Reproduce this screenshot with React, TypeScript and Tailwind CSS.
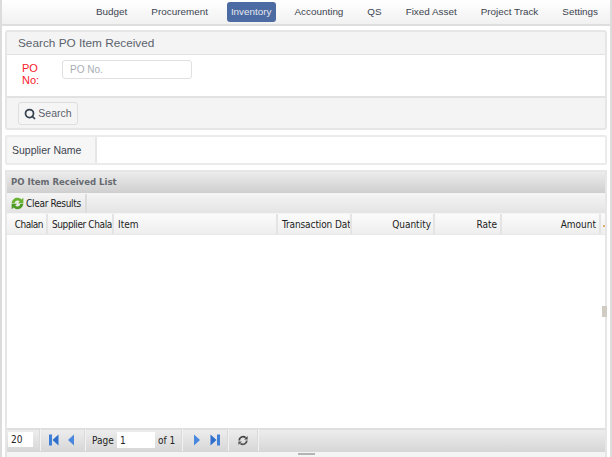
import { Search } from 'lucide-react';

const navItems = ['Budget', 'Procurement', 'Inventory', 'Accounting', 'QS', 'Fixed Asset', 'Project Track', 'Settings'];

const columns = [
  { label: 'Chalan', width: 'w-[41px]', align: 'text-right pr-[3px] tracking-[-0.5px]' },
  { label: 'Supplier Chalan', width: 'w-[66px]', align: 'text-left pl-[4px] tracking-[-0.4px]' },
  { label: 'Item', width: 'w-[164px]', align: 'text-left pl-[4px]' },
  { label: 'Transaction Date', width: 'w-[74px]', align: 'text-left pl-[4px] tracking-[-0.1px]' },
  { label: 'Quantity', width: 'w-[83px]', align: 'text-right pr-[2px]' },
  { label: 'Rate', width: 'w-[67px]', align: 'text-right pr-[3px]' },
  { label: 'Amount', width: 'w-[99px]', align: 'text-right pr-[3px]' },
];

function Separator({ className }: { className: string }) {
  return <div className={`h-[22px] w-[2px] shrink-0 border-r border-[#f2f2f2] bg-[#dadada] ${className}`} />;
}

function FirstIcon({ flip, className }: { flip?: boolean; className: string }) {
  return (
    <svg width="10" height="12" viewBox="0 0 10 12" className={`shrink-0 ${flip ? 'rotate-180' : ''} ${className}`}>
      <rect x="0" y="0.5" width="3" height="11" fill="#3f7fd8" />
      <path d="M9.5 0.5V11.5L3.5 6Z" fill="#2f6fcc" />
    </svg>
  );
}

function PrevIcon({ flip, className }: { flip?: boolean; className: string }) {
  return (
    <svg width="6" height="12" viewBox="0 0 6 12" className={`shrink-0 ${flip ? 'rotate-180' : ''} ${className}`}>
      <path d="M6 0.5V11.5L0 6Z" fill="#4a88de" />
    </svg>
  );
}

function GreenRefresh() {
  return (
    <svg width="13" height="13" viewBox="0 0 12 12" className="shrink-0">
      <path d="M0.6 5.8C1 2.4 3.8 0.6 6.2 0.8 7.7 0.9 8.8 1.6 9.5 2.4L11.4 0.6V5.8H6.4L8.1 4.1C7.5 3.5 6.8 3.2 6 3.2 4.6 3.2 3.7 4.2 3.4 5.8Z" fill="#69b330" />
      <path d="M11.4 6.2C11 9.6 8.2 11.4 5.8 11.2 4.3 11.1 3.2 10.4 2.5 9.6L0.6 11.4V6.2H5.6L3.9 7.9C4.5 8.5 5.2 8.8 6 8.8 7.4 8.8 8.3 7.8 8.6 6.2Z" fill="#4c9a24" />
    </svg>
  );
}

function GreyRefresh() {
  return (
    <svg width="10" height="11" viewBox="0 0 10 11" className="ml-[9px] shrink-0" fill="none">
      <path d="M1.2 5.5A3.8 3.8 0 0 1 7.6 2.7" stroke="#444" strokeWidth="1.8" />
      <path d="M8.8 5.5A3.8 3.8 0 0 1 2.4 8.3" stroke="#555" strokeWidth="1.8" />
      <path d="M6.2 4.4H9.6V0.9Z" fill="#444" />
      <path d="M3.8 6.6H0.4V10.1Z" fill="#555" />
    </svg>
  );
}

export default function App() {
  return (
    <div className="h-[457px] w-[612px] overflow-hidden border-x-2 border-[#dcdcdc] bg-white font-['Liberation_Sans',sans-serif]">
      <nav className="flex h-[26px] items-center justify-end border-b-2 border-[#dedede] bg-gradient-to-b from-white to-[#f1f1f1] text-[9.9px] text-[#3c4450]">
        {navItems.map((item) => (
          <a
            key={item}
            className={
              item === 'Inventory'
                ? 'mx-[7px] flex h-[20px] items-center rounded-[3px] bg-[#4d6ba3] px-[4px] text-[#e4e8f0]'
                : 'mx-[12px] whitespace-nowrap'
            }
          >
            {item}
          </a>
        ))}
      </nav>

      <div className="flex flex-col pl-[3px] pr-[3px] pt-[4px]">
        <section className="h-[100px] rounded-[3px] border-2 border-[#e6e6e6] bg-[#f4f4f4]">
          <h2 className="box-content flex h-[21px] items-center border-b-2 border-[#e2e2e2] pl-[11px] pt-[1px] text-[11.8px] text-[#5b626c] -mb-[1px]">
            Search PO Item Received
          </h2>
          <div className="flex h-[43px] border-b-2 border-[#e2e2e2] bg-white">
            <label className="ml-[15px] mt-[7px] w-[25px] text-[11px] leading-[12px] text-[#f8202c]">PO No:</label>
            <input
              placeholder="PO No."
              className="ml-[15px] mt-[5px] h-[19px] w-[130px] rounded-[3px] border border-[#e0e0e0] px-[7px] text-[10px] placeholder:text-[#a9adb3]"
            />
          </div>
          <div className="pl-[11px] pt-[4px]">
            <button className="flex h-[23px] w-[60px] items-center justify-center gap-[2px] rounded-[3px] border border-[#dedede] bg-[#f5f5f5] text-[10.5px] text-[#5b626c]">
              <Search size={12} strokeWidth={3.5} className="text-[#36424f]" />
              Search
            </button>
          </div>
        </section>

        <section className="mt-[5px] flex h-[30px] rounded-[2px] border-2 border-[#ebebeb] bg-white">
          <div className="flex w-[90px] items-center border-r-2 border-[#e6e6e6] bg-[#f6f6f6] pl-[5px] pt-[1px] text-[10.5px] text-[#3d4550]">
            Supplier Name
          </div>
        </section>

        <section className="mt-[5px] flex h-[282px] flex-col border-x-2 border-t-2 border-[#e6e6e6] bg-white font-['DejaVu_Sans_Condensed','DejaVu_Sans',sans-serif]">
          <h3 className="flex h-[21px] items-center bg-gradient-to-b from-[#ececec] to-[#cfcfcf] pl-[4px] text-[9.5px] font-bold text-[#666a70]">
            PO Item Received List
          </h3>
          <div className="flex h-[21px] items-center border-y border-[#f4f4f4] bg-gradient-to-b from-[#f4f4f4] to-[#e4e4e4] text-[10px] text-[#222]">
            <div className="flex h-full w-[80px] items-center gap-[2px] border-r-2 border-[#dcdcdc] pl-[4px] tracking-[-0.3px]">
              <GreenRefresh />
              Clear Results
            </div>
          </div>
          <div className="relative flex h-[21px] items-stretch border-b border-[#e8e8e8] bg-gradient-to-b from-[#fbfbfb] to-[#eeeeee] text-[10px] text-[#222]">
            {columns.map((column) => (
              <div key={column.label} className={`${column.width} ${column.align} overflow-hidden whitespace-nowrap border-r-2 border-[#e4e4e4] leading-[22px]`}>
                {column.label}
              </div>
            ))}
            <span className="absolute right-0 top-[11px] h-[2px] w-[2px] bg-[#e0b070]" />
          </div>
          <div className="relative flex-1">
            <div className="absolute right-[-2px] top-[71px] h-[11px] w-[5px] bg-[#d0ccc4]" />
          </div>
          <div className="flex h-[24px] items-center border-t-2 border-[#dedede] bg-gradient-to-b from-[#ededed] to-[#d6d6d6] pb-[2px] pl-[1px] text-[10px] text-[#222]">
            <input defaultValue="20" className="mb-[1px] h-[15px] w-[25px] bg-white pl-[3px] text-[10px]" />
            <Separator className="ml-[6px]" />
            <FirstIcon className="ml-[8px]" />
            <PrevIcon className="ml-[9px]" />
            <Separator className="ml-[10px]" />
            <span className="ml-[6px] w-[25px]">Page</span>
            <input defaultValue="1" className="h-[16px] w-[38px] bg-white pl-[3px] text-[10px]" />
            <span className="ml-[3px] w-[20px]">of 1</span>
            <Separator className="ml-[3px]" />
            <PrevIcon flip className="ml-[11px]" />
            <FirstIcon flip className="ml-[10px]" />
            <Separator className="ml-[7px]" />
            <GreyRefresh />
            <Separator className="ml-[9px]" />
          </div>
        </section>

        <div className="relative flex h-[5px] justify-center border-x-2 border-[#e6e6e6] bg-[#f4f4f4]">
          <div className="mt-[1px] h-[2px] w-[17px] bg-[#b4b4b4]" />
        </div>
      </div>
    </div>
  );
}
